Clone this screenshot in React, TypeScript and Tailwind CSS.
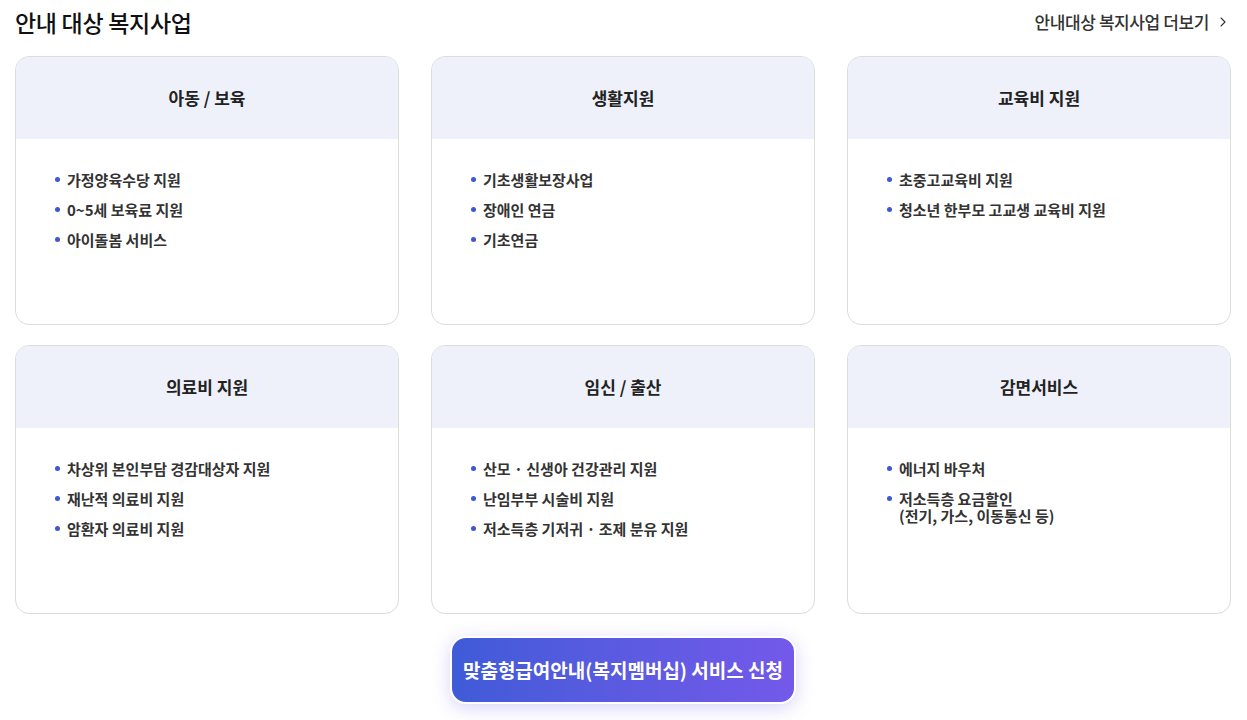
import { ChevronRight } from 'lucide-react'

const categories: { title: string; items: string[][] }[] = [
  { title: '아동 / 보육', items: [['가정양육수당 지원'], ['0~5세 보육료 지원'], ['아이돌봄 서비스']] },
  { title: '생활지원', items: [['기초생활보장사업'], ['장애인 연금'], ['기초연금']] },
  { title: '교육비 지원', items: [['초중고교육비 지원'], ['청소년 한부모 고교생 교육비 지원']] },
  { title: '의료비 지원', items: [['차상위 본인부담 경감대상자 지원'], ['재난적 의료비 지원'], ['암환자 의료비 지원']] },
  { title: '임신 / 출산', items: [['산모 · 신생아 건강관리 지원'], ['난임부부 시술비 지원'], ['저소득층 기저귀 · 조제 분유 지원']] },
  { title: '감면서비스', items: [['에너지 바우처'], ['저소득층 요금할인', '(전기, 가스, 이동통신 등)']] },
]

function CategoryCard({ title, items }: { title: string; items: string[][] }) {
  return (
    <div className="h-[269px] rounded-[14px] border border-[#dcdcdc] bg-white overflow-hidden">
      <div className="h-[82px] bg-[#eef1fa] flex items-center justify-center">
        <h3 className="text-[17px] font-bold text-[#222]">{title}</h3>
      </div>
      <ul className="pt-[32px] pl-[39px] flex flex-col gap-[13px]">
        {items.map((lines, i) => (
          <li key={i} className="flex gap-[7px] text-[15px] leading-[17px] font-semibold text-[#333]">
            <span className="mt-[6px] w-[5px] h-[5px] rounded-full bg-[#3f56d6] shrink-0" />
            <span className="whitespace-pre-line">{lines.join('\n')}</span>
          </li>
        ))}
      </ul>
    </div>
  )
}

export default function App() {
  return (
    <div className="w-[1247px] h-[720px] bg-white font-['Noto_Sans_CJK_KR','Noto_Sans',sans-serif] overflow-hidden">
      <div className="ml-[15px] w-[1216px]">
        <div className="h-[44px] flex items-center justify-between">
          <h2 className="text-[23px] font-medium text-[#111] tracking-[-0.3px]">안내 대상 복지사업</h2>
          <a className="flex items-center gap-[6px] text-[17px] font-medium text-[#333] tracking-[-0.4px] cursor-pointer">
            안내대상 복지사업 더보기
            <ChevronRight className="w-[16px] h-[16px] text-[#333]" strokeWidth={1.6} />
          </a>
        </div>
        <div className="mt-[12px] grid grid-cols-3 gap-x-[32px] gap-y-[20px]">
          {categories.map(c => (
            <CategoryCard key={c.title} title={c.title} items={c.items} />
          ))}
        </div>
        <div className="mt-[22px] flex justify-center">
          <button
            type="button"
            className="w-[346px] h-[68px] rounded-[16px] border-[2px] border-white bg-gradient-to-r from-[#3f5bd8] to-[#7359ea] text-white text-[19px] font-bold shadow-[0_4px_18px_rgba(110,100,230,0.28)]"
          >
            맞춤형급여안내(복지멤버십) 서비스 신청
          </button>
        </div>
      </div>
    </div>
  )
}
